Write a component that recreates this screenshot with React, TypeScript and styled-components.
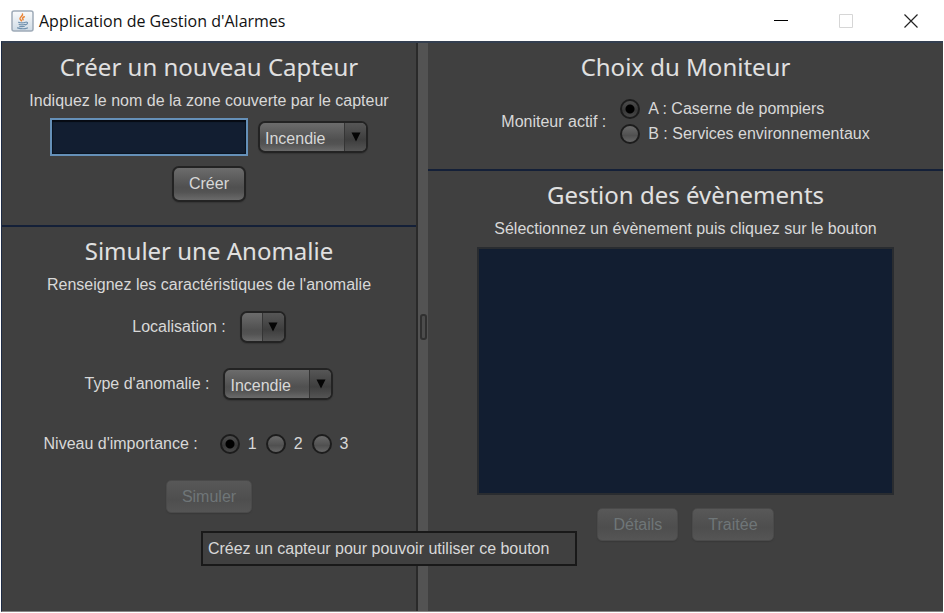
import React, { useState } from "react";
import styled, { createGlobalStyle, css } from "styled-components";

const GlobalStyle = createGlobalStyle`
  *, *::before, *::after { box-sizing: border-box; }
  body {
    margin: 0;
    background: #ffffff;
    font-family: "Liberation Sans", Arial, sans-serif;
    font-size: 16px;
    line-height: 20px;
    color: #d8d8d8;
  }
  button, input, select { font: inherit; color: inherit; }
`;

const raised = css`
  background: linear-gradient(#6c6c6c, #505050 60%, #535353 75%, #6a6a6a);
  border: 2px solid #232323;
  border-radius: 7px;
  box-shadow: 0 1px 1px #363636;
`;

const Frame = styled.div`
  display: flex;
  flex-direction: column;
  min-height: 100vh;
  padding: 0 1px 1px;
`;

const TitleBar = styled.header`
  display: flex;
  align-items: center;
  height: 41px;
  padding-left: 10px;
  color: #111111;
`;

const AppName = styled.h1`
  flex: 1;
  margin: 0 0 0 5px;
  font: 400 16px/24px "Open Sans", "Noto Sans", sans-serif;
`;

const WindowButton = styled.button`
  display: grid;
  place-items: center;
  width: 65px;
  height: 40px;
  padding: 0;
  border: 0;
  background: none;
`;

const Split = styled.main`
  flex: 1;
  display: grid;
  grid-template-columns: 414fr 12px 515fr;
  background: #404040;
  border: solid #1d2b45;
  border-width: 2px 0 0 1px;
  border-top-color: #343f50;
  border-bottom: 1px solid #8a8686;
`;

const Pane = styled.div`
  display: flex;
  flex-direction: column;
  min-width: 0;
`;

const Divider = styled.div`
  display: grid;
  place-items: center;
  background: #535353;
  border-left: 2px solid #2a2a2a;
`;

const Grip = styled.span`
  width: 7px;
  height: 26px;
  border: 2px solid #303030;
  border-radius: 3px;
  background: #4c4c4c;
`;

const Section = styled.section<{ $ruled?: boolean; $height?: number }>`
  display: flex;
  flex-direction: column;
  align-items: center;
  min-height: ${(p) => (p.$height ? `${p.$height}px` : "0")};
  padding-top: 10px;
  border-bottom: ${(p) => (p.$ruled ? "2px solid #142038" : "0")};
`;

const Heading = styled.h2`
  margin: 0;
  font: 400 24px/28px "Noto Sans", Verdana, sans-serif;
  color: #e0e0e0;
`;

const Hint = styled.p`
  margin: 10px 0 0;
`;

const Row = styled.div<{ $top: number; $gap: number; $end?: number }>`
  display: flex;
  align-items: center;
  gap: ${(p) => p.$gap}px;
  margin-top: ${(p) => p.$top}px;
  padding-right: ${(p) => p.$end ?? 0}px;
`;

const ZoneInput = styled.input`
  width: 198px;
  height: 38px;
  padding: 4px 8px;
  border: 2px solid #6590b8;
  outline: 0;
  background: #121e31;
  box-shadow: inset 0 2px 1px #060a12, inset 0 0 1px 1px #0b1422;
`;

const ComboBox = styled.span<{ $width: number }>`
  display: grid;
  width: ${(p) => p.$width}px;
  height: 32px;
`;

const ComboSelect = styled.select`
  ${raised}
  grid-area: 1 / 1;
  width: 100%;
  padding: 3px 24px 0 5px;
  appearance: none;
  outline: 0;
`;

const ComboArrow = styled.span`
  grid-area: 1 / 1;
  justify-self: end;
  display: grid;
  place-items: center;
  width: 22px;
  margin: 2px;
  border-left: 1px solid #353535;
  border-radius: 0 5px 5px 0;
  background: linear-gradient(#565656, #3e3e3e 60%, #545454);
  pointer-events: none;
`;

const PushButton = styled.button`
  ${raised}
  height: 36px;
  padding: 0 15px;

  &:disabled {
    height: 33px;
    border: 1px solid #4a4a4a;
    border-radius: 5px;
    background: linear-gradient(#585858, #4e4e4e 60%, #555555);
    box-shadow: 0 1px 1px #393939;
    color: #6f7678;
  }
`;

const RadioGroup = styled.div<{ $vertical?: boolean }>`
  display: flex;
  flex-direction: ${(p) => (p.$vertical ? "column" : "row")};
  gap: ${(p) => (p.$vertical ? "5px" : "9px")};
`;

const RadioLabel = styled.label`
  display: flex;
  align-items: center;
  gap: 8px;
  height: 20px;
`;

const RadioInput = styled.input`
  flex: none;
  width: 20px;
  height: 20px;
  margin: 0;
  appearance: none;
  border: 2px solid #1c1c1c;
  border-radius: 50%;
  background: linear-gradient(#6a6a6a, #505050 60%, #666666);

  &:checked {
    background: radial-gradient(circle, #000000 4px, transparent 5px),
      linear-gradient(#4c4c4c, #383838 60%, #484848);
  }
`;

const TipAnchor = styled.div`
  position: relative;
  margin-top: 26px;
`;

const Tip = styled.div`
  position: absolute;
  z-index: 1;
  top: 51px;
  left: 35px;
  width: 376px;
  padding: 6px 5px 5px;
  border: 2px solid #191919;
  background: #404040;
  white-space: nowrap;
`;

const EventList = styled.select`
  width: 81%;
  height: 248px;
  margin-top: 8px;
  border: 2px solid #292c30;
  border-radius: 0;
  outline: 0;
  background: #121e31;
`;

function JavaIcon() {
  return (
    <svg width="23" height="22" viewBox="0 0 23 22" aria-hidden="true">
      <defs>
        <linearGradient id="tile" x2="0" y2="1">
          <stop offset="0" stopColor="#fafbfc" />
          <stop offset="1" stopColor="#cfdbe5" />
        </linearGradient>
      </defs>
      <rect x="1" y="1" width="21" height="20" rx="2" fill="url(#tile)" stroke="#9eabb8" strokeWidth="1.5" />
      <g fill="none" strokeLinecap="round">
        <path d="M11.500 4c1 1.800-3 3-2.500 4.800.3.800 1 1.200 1.500 2M13.300 6.800c-1.800.8-2.200 1.700-1.200 3" stroke="#ea8537" strokeWidth="1.500" />
        <path d="M7.500 12.300c2 .7 5 .7 7 0M8 14.300c2 .7 4.300.7 6 0M8.600 16.200c1.500.5 3.200.5 4.800 0M15 12.200c2.300-.3 2 2-.5 2.700M6.500 17.900c3 .9 7.500.9 10 0" stroke="#6f90ad" strokeWidth="1.100" />
      </g>
    </svg>
  );
}

function Combo(props: { id: string; label?: string; width: number; options: string[] }) {
  return (
    <ComboBox $width={props.width}>
      <ComboSelect id={props.id} aria-label={props.label}>
        {props.options.map((o) => (
          <option key={o}>{o}</option>
        ))}
      </ComboSelect>
      <ComboArrow>
        <svg width="10" height="10" viewBox="0 0 10 10" aria-hidden="true">
          <path d="M0.500 0.500h9L5 9.500z" fill="#050505" />
        </svg>
      </ComboArrow>
    </ComboBox>
  );
}

function Radios(props: { name: string; labelledBy: string; options: string[]; vertical?: boolean }) {
  const [value, setValue] = useState(props.options[0]);
  return (
    <RadioGroup role="radiogroup" aria-labelledby={props.labelledBy} $vertical={props.vertical}>
      {props.options.map((o) => (
        <RadioLabel key={o}>
          <RadioInput type="radio" name={props.name} checked={value === o} onChange={() => setValue(o)} />
          {o}
        </RadioLabel>
      ))}
    </RadioGroup>
  );
}

export default function App() {
  return (
    <Frame>
      <GlobalStyle />
      <TitleBar>
        <JavaIcon />
        <AppName>Application de Gestion d'Alarmes</AppName>
        <WindowButton aria-label="Réduire">
          <svg width="14" height="14" viewBox="0 0 14 14">
            <path d="M0 6.500h14" stroke="#000000" />
          </svg>
        </WindowButton>
        <WindowButton aria-label="Agrandir" disabled>
          <svg width="14" height="14" viewBox="0 0 14 14">
            <path d="M.5.5h13v13H.5z" fill="none" stroke="#d6d6d6" />
          </svg>
        </WindowButton>
        <WindowButton aria-label="Fermer">
          <svg width="14" height="14" viewBox="0 0 14 14">
            <path d="M.5.5l13 13M13.500.5l-13 13" stroke="#222222" strokeWidth="1.200" />
          </svg>
        </WindowButton>
      </TitleBar>

      <Split>
        <Pane>
          <Section $ruled $height={184}>
            <Heading>Créer un nouveau Capteur</Heading>
            <Hint id="zone-hint">Indiquez le nom de la zone couverte par le capteur</Hint>
            <Row $top={7} $gap={10}>
              <ZoneInput type="text" aria-labelledby="zone-hint" />
              <Combo id="sensor-type" label="Type de capteur" width={110} options={["Incendie"]} />
            </Row>
            <Row $top={10} $gap={0}>
              <PushButton>Créer</PushButton>
            </Row>
          </Section>
          <Section>
            <Heading>Simuler une Anomalie</Heading>
            <Hint>Renseignez les caractéristiques de l'anomalie</Hint>
            <Row $top={16} $gap={14}>
              <label htmlFor="location">Localisation :</label>
              <Combo id="location" width={46} options={[]} />
            </Row>
            <Row $top={25} $gap={14}>
              <label htmlFor="anomaly-type">Type d'anomalie :</label>
              <Combo id="anomaly-type" width={110} options={["Incendie"]} />
            </Row>
            <Row $top={34} $gap={22} $end={26}>
              <span id="level">Niveau d'importance :</span>
              <Radios name="level" labelledBy="level" options={["1", "2", "3"]} />
            </Row>
            <TipAnchor>
              <PushButton disabled aria-describedby="simulate-tip">Simuler</PushButton>
              <Tip role="tooltip" id="simulate-tip">Créez un capteur pour pouvoir utiliser ce bouton</Tip>
            </TipAnchor>
          </Section>
        </Pane>

        <Divider>
          <Grip />
        </Divider>

        <Pane>
          <Section $ruled $height={128}>
            <Heading>Choix du Moniteur</Heading>
            <Row $top={18} $gap={14}>
              <span id="monitor">Moniteur actif :</span>
              <Radios
                vertical
                name="monitor"
                labelledBy="monitor"
                options={["A : Caserne de pompiers", "B : Services environnementaux"]}
              />
            </Row>
          </Section>
          <Section>
            <Heading>Gestion des évènements</Heading>
            <Hint id="events-hint">Sélectionnez un évènement puis cliquez sur le bouton</Hint>
            <EventList size={10} aria-labelledby="events-hint" />
            <Row $top={13} $gap={14}>
              <PushButton disabled>Détails</PushButton>
              <PushButton disabled>Traitée</PushButton>
            </Row>
          </Section>
        </Pane>
      </Split>
    </Frame>
  );
}
